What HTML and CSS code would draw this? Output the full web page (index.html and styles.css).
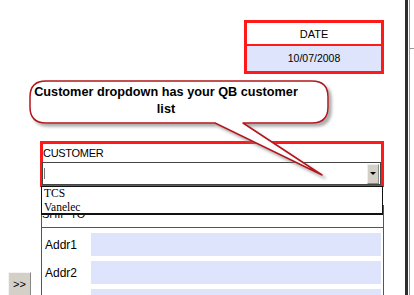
FILE: index.html
```html
<!DOCTYPE html>
<html lang="en">
<head>
  <meta charset="UTF-8">
  <title>Invoice - Customer</title>
  <link rel="stylesheet" href="styles.css">
</head>
<body>

<div class="window">
  <main class="sheet">

    <div class="date-box">
      <div class="date-head">DATE</div>
      <div class="date-val">10/07/2008</div>
    </div>

    <div class="customer">
      <div class="cust-head">CUSTOMER</div>
      <div class="combo">
        <span class="caret"></span>
        <span class="drop-btn"><span class="arrow"></span></span>
      </div>
    </div>

    <div class="lower">
      <div class="side">
        <button class="more">&gt;&gt;</button>
      </div>
      <div class="shipto">
        <div class="ship-head">SHIP TO</div>
        <div class="field-row"><span class="label">Addr1</span><div class="field"></div></div>
        <div class="field-row"><span class="label">Addr2</span><div class="field"></div></div>
        <div class="field-row"><span class="label"></span><div class="field"></div></div>
      </div>
    </div>

    <!-- open dropdown, sits over the ship to block -->
    <ul class="dropdown-list">
      <li>TCS</li>
      <li>Vanelec</li>
    </ul>

    <!-- callout bubble -->
    <svg class="callout-shape" width="405" height="295" viewBox="0 0 405 295">
      <defs>
        <filter id="shadow" x="-10%" y="-10%" width="130%" height="150%">
          <feDropShadow dx="3" dy="3" stdDeviation="1.5" flood-color="#777" flood-opacity="0.6"/>
        </filter>
      </defs>
      <path d="M46 81 H312 Q328 81 328 97 V107 Q328 123 312 123 H243 L322 175 L215 123 H46 Q30 123 30 107 V97 Q30 81 46 81 Z"
            fill="#fff" stroke="#b3141b" stroke-width="1.5" stroke-linejoin="round" filter="url(#shadow)"/>
    </svg>
    <div class="callout-text">Customer dropdown has your QB customer<br>list</div>

  </main>
  <div class="edge"><span class="tick"></span></div>
</div>

</body>
</html>
```

FILE: styles.css
```css
body {
  margin: 0;
  padding: 0;
  background: #fff;
  color: #000;
  font-family: "Liberation Sans", Arial, sans-serif;
}

.window {
  display: flex;
  width: 414px;
  height: 295px;
  overflow: hidden;
}

.sheet {
  position: relative;
  width: 405px;
  flex: none;
}

/* date */
.date-box {
  box-sizing: border-box;
  width: 140px;
  margin: 20px 0 0 244px;
  border: 3px solid #ff1a1a;
  font-size: 11px;
  text-align: center;
}

.date-head {
  height: 21px;
  line-height: 22px;
  border-bottom: 2px solid #ff1a1a;
}

.date-val {
  height: 25px;
  line-height: 25px;
  background: #dde4fb;
  font-size: 10.5px;
}

/* customer */
.customer {
  box-sizing: border-box;
  width: 344px;
  margin: 67px 0 0 40px;
  border: 3px solid #ff1a1a;
  border-bottom-width: 2px;
}

.cust-head {
  height: 18px;
  line-height: 19px;
  font-size: 11px;
  letter-spacing: -0.3px;
}

.combo {
  box-sizing: border-box;
  display: flex;
  align-items: center;
  justify-content: space-between;
  height: 23px;
  margin-left: -1px;
  border: 1px solid #444;
  background: #fff;
}

.caret {
  width: 1px;
  height: 11px;
  margin-left: 1px;
  background: #777;
}

.drop-btn {
  box-sizing: border-box;
  display: flex;
  align-items: center;
  justify-content: center;
  width: 12px;
  height: 20px;
  margin-right: 1px;
  background: #d4d0c8;
  border: 1px solid #8a8a8a;
  border-top-color: #eee;
  border-left-color: #eee;
}

.arrow {
  width: 0;
  height: 0;
  border-left: 3px solid transparent;
  border-right: 3px solid transparent;
  border-top: 3px solid #000;
}

/* lower part */
.lower {
  display: flex;
  margin-top: 18px;
}

.side {
  width: 41px;
  flex: none;
}

.more {
  box-sizing: border-box;
  width: 23px;
  height: 24px;
  margin: 67px 0 0 8px;
  padding: 0;
  background: #d4d0c8;
  border: 1px solid #888;
  border-top-color: #f4f4f4;
  border-left-color: #f4f4f4;
  font-family: "Liberation Sans", Arial, sans-serif;
  font-size: 11px;
  color: #000;
}

.shipto {
  box-sizing: border-box;
  width: 343px;
  height: 100px;
  border-left: 1px solid #555;
  border-right: 1px solid #555;
}

.ship-head {
  height: 22px;
  line-height: 19px;
  border-bottom: 1px solid #555;
  font-size: 11px;
}

.field-row {
  display: flex;
  align-items: center;
  margin-top: 5px;
}

.field-row:first-of-type {
  margin-top: 4px;
}

.label {
  width: 46px;
  padding-left: 3px;
  flex: none;
  font-size: 12px;
}

.field {
  flex: 1;
  height: 23px;
  margin-right: 2px;
  background: #dde4fb;
}

/* dropdown list */
.dropdown-list {
  position: absolute;
  top: 186px;
  left: 41px;
  box-sizing: border-box;
  width: 342px;
  height: 29px;
  margin: 0;
  padding: 0 0 0 2px;
  list-style: none;
  background: #fff;
  border: 1px solid #111;
  border-bottom-width: 2px;
  font-family: "Liberation Serif", "Times New Roman", serif;
  font-size: 11.5px;
  line-height: 13.5px;
}

/* callout */
.callout-shape {
  position: absolute;
  top: 0;
  left: 0;
  pointer-events: none;
}

.callout-text {
  position: absolute;
  top: 84px;
  left: 31px;
  width: 270px;
  font-size: 12.7px;
  font-weight: bold;
  line-height: 17px;
  text-align: center;
  white-space: nowrap;
}

/* window edge on the right */
.edge {
  position: relative;
  flex: 1;
  border-left: 3px solid #2e2e2e;
  background: #fff;
}

.edge::before {
  content: "";
  position: absolute;
  top: 0;
  bottom: 0;
  left: 1px;
  width: 1px;
  background: #999;
}

.tick {
  position: absolute;
  top: 48px;
  left: 1px;
  width: 5px;
  height: 1px;
  background: #999;
}
```
